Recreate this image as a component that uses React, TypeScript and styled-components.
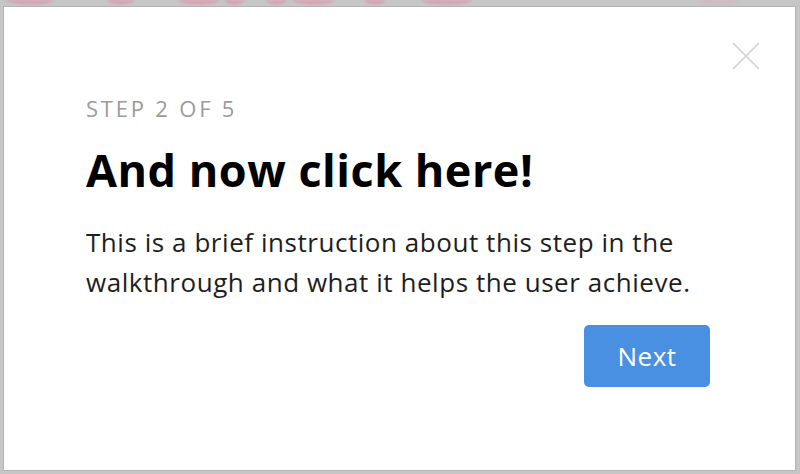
import React from "react";
import styled, { createGlobalStyle } from "styled-components";

const GlobalStyle = createGlobalStyle`
  html, body {
    margin: 0;
    padding: 0;
  }
  body {
    font-family: "Open Sans", Lato, sans-serif;
    background: #c6c6c6;
  }
`;

const Page = styled.div`
  position: relative;
  width: 800px;
  height: 474px;
  box-sizing: border-box;
  padding: 6px 4px 3px 3px;
  background: #c6c6c6;
  overflow: hidden;
`;

const Backdrop = styled.svg`
  position: absolute;
  left: 0;
  top: 0;
  width: 800px;
  height: 8px;
  filter: blur(1.2px);
`;

const Dialog = styled.div`
  position: relative;
  height: 100%;
  box-sizing: border-box;
  background: #ffffff;
  border: 1px solid #b4b4b4;
  padding: 86px 85px 0 82px;
  display: flex;
  flex-direction: column;
`;

const CloseButton = styled.button`
  position: absolute;
  top: 32px;
  right: 32px;
  width: 34px;
  height: 34px;
  padding: 0;
  border: none;
  background: none;
  cursor: pointer;
`;

const StepLabel = styled.div`
  font-size: 22px;
  line-height: 30px;
  letter-spacing: 2.8px;
  color: #9b9b9b;
  text-transform: uppercase;
`;

const Title = styled.h1`
  margin: 19px 0 0;
  font-size: 45px;
  line-height: 56px;
  letter-spacing: 0.5px;
  font-weight: 700;
  color: #000;
`;

const Body = styled.p`
  margin: 24px 0 0;
  font-size: 26px;
  line-height: 40px;
  letter-spacing: 0.55px;
  color: #1e1e1e;
`;

const Actions = styled.div`
  display: flex;
  justify-content: flex-end;
  margin-top: 23px;
`;

const NextButton = styled.button`
  width: 126px;
  height: 62px;
  border: none;
  border-radius: 5px;
  background: #4a90e2;
  color: #fff;
  font-family: inherit;
  font-size: 26px;
  letter-spacing: 0.5px;
  cursor: pointer;
`;

const blobs = [
  [5, 50], [107, 28], [178, 42], [224, 21], [266, 21],
  [292, 43], [364, 22], [420, 53], [697, 43],
];

export default function App() {
  return (
    <>
      <GlobalStyle />
      <Page>
        <Backdrop viewBox="0 0 800 8">
          {blobs.map(([x, w], i) => (
            <ellipse key={i} cx={x + w / 2} cy={-1} rx={w / 2} ry={6}
              fill={i === blobs.length - 1 ? "#cdbcc0" : "#d7a6b0"} />
          ))}
        </Backdrop>
        <Dialog>
          <CloseButton aria-label="Close">
            <svg width="34" height="34" viewBox="0 0 34 34">
              <path d="M4 4 L30 30 M30 4 L4 30" stroke="#cfcfcf" strokeWidth="1.5" />
            </svg>
          </CloseButton>
          <StepLabel>Step 2 of 5</StepLabel>
          <Title>And now click here!</Title>
          <Body>
            This is a brief instruction about this step in the walkthrough and what it helps the user achieve.
          </Body>
          <Actions>
            <NextButton>Next</NextButton>
          </Actions>
        </Dialog>
      </Page>
    </>
  );
}
